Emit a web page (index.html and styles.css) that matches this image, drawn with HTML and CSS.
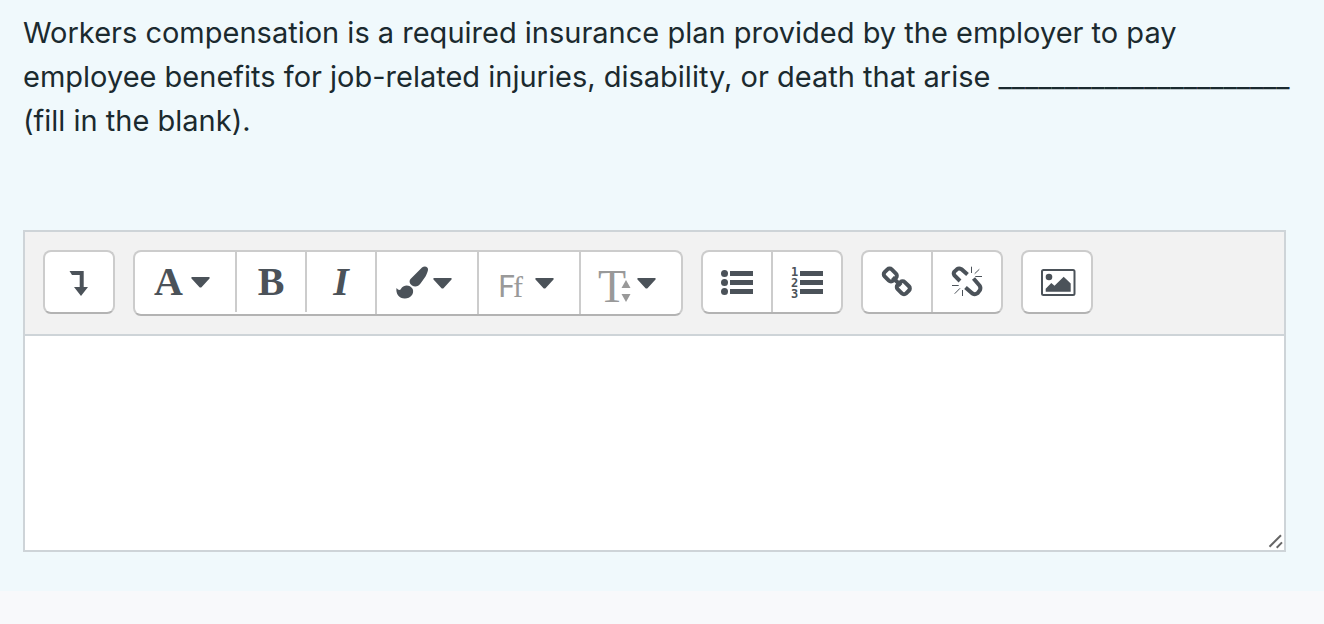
FILE: index.html
```html
<!DOCTYPE html>
<html lang="en">
<head>
    <meta charset="UTF-8">
    <meta name="viewport" content="width=device-width, initial-scale=1.0">
    <title>Quiz Question</title>
    <link rel="stylesheet" href="styles.css">
</head>
<body>
    <div class="question">
        <label class="question-text" for="answer">Workers compensation is a required insurance plan provided by the employer to pay employee benefits for job-related injuries, disability, or death that arise ______________________ (fill in the blank).</label>

        <div class="editor">
            <div class="toolbar">
                <div class="group">
                    <button type="button" aria-label="Show more buttons">
                        <svg class="icon" viewBox="0 0 36 36"><path d="M8.5 7H22.7V23H27L20 32L13 23H18.7V11H11Z"/></svg>
                    </button>
                </div>

                <div class="group">
                    <button type="button" class="drop short" aria-label="Paragraph styles">
                        <span class="glyph bold">A</span>
                        <svg class="caret" viewBox="0 0 19 11"><path d="M1 0H18Q19.5 .5 18.5 1.5L10.5 10.2Q9.5 11 8.5 10.2L.5 1.5Q-.5 .5 1 0Z"/></svg>
                    </button>
                    <button type="button" class="short" aria-label="Bold"><span class="bold">B</span></button>
                    <button type="button" class="short" aria-label="Italic"><span class="bold italic">I</span></button>
                    <button type="button" class="drop" aria-label="Font color">
                        <svg class="glyph" viewBox="0 0 37 36"><path d="M26 2.5C28.500 .5 32.500 1.500 32 5C31.700 7 30.5 9.500 29.500 11.500L24.5 18.500C22.500 21.500 19 22.500 16 20.500C13 18 13 15.500 15 13.500Z"/><path d="M.5 23C2.500 25.500 4.500 25.5 5.500 23C8 19.500 14 19.500 16.700 24C18.5 29 14.5 33.300 9 33.500C3.500 33.700 -.5 29 .5 23Z"/></svg>
                        <svg class="caret" viewBox="0 0 19 11"><path d="M1 0H18Q19.5 .5 18.5 1.5L10.5 10.2Q9.5 11 8.5 10.2L.5 1.5Q-.5 .5 1 0Z"/></svg>
                    </button>
                    <button type="button" class="drop" aria-label="Font family">
                        <svg class="glyph grey" viewBox="0 0 37 36"><text class="f-sans" x="0" y="32">F</text><text class="f-serif" x="15" y="32">f</text></svg>
                        <svg class="caret" viewBox="0 0 19 11"><path d="M1 0H18Q19.5 .5 18.5 1.5L10.5 10.2Q9.5 11 8.5 10.2L.5 1.5Q-.5 .5 1 0Z"/></svg>
                    </button>
                    <button type="button" class="drop" aria-label="Font size">
                        <svg class="glyph grey" viewBox="0 0 37 36"><text class="t-serif" x="-2" y="37">T</text><path d="M21.5 23L26 15L30.5 23ZM21.5 29L26 37L30.5 29Z"/></svg>
                        <svg class="caret" viewBox="0 0 19 11"><path d="M1 0H18Q19.5 .5 18.5 1.5L10.5 10.2Q9.5 11 8.5 10.2L.5 1.5Q-.5 .5 1 0Z"/></svg>
                    </button>
                </div>

                <div class="group">
                    <button type="button" aria-label="Unordered list">
                        <svg class="icon" viewBox="0 0 36 36"><circle cx="5.5" cy="9.5" r="3.5"/><circle cx="5.5" cy="18.5" r="3.5"/><circle cx="5.5" cy="27.5" r="3.5"/><path d="M11 7h23v5H11zM11 16h23v5H11zM11 25h23v5H11z"/></svg>
                    </button>
                    <button type="button" aria-label="Ordered list">
                        <svg class="icon" viewBox="0 0 36 36"><text class="digit" x="2" y="12">1</text><text class="digit" x="2" y="23">2</text><text class="digit" x="2" y="34">3</text><path d="M11 7h23v5H11zM11 16h23v5H11zM11 25h23v5H11z"/></svg>
                    </button>
                </div>

                <div class="group">
                    <button type="button" aria-label="Link">
                        <svg class="icon line" viewBox="0 0 36 36"><rect x="-6" y="-5" width="12" height="10" rx="3" transform="translate(11.3 11) rotate(45)"/><rect x="-6" y="-5" width="12" height="10" rx="3" transform="translate(24.3 23.7) rotate(45)"/><path d="M13.5 13.5L22 21.5"/></svg>
                    </button>
                    <button type="button" aria-label="Unlink">
                        <svg class="icon line" viewBox="0 0 36 36"><path d="M11 17L5.5 11.5Q4 9.5 5.5 7.5L8 5.2Q10 3.8 12.500 5.2L18.5 10.5M24.5 14.5L30.5 21.5Q32 23.5 31 26L28.5 29.2Q26 31 23.5 29.5L16.5 23.5"/><path class="thin" d="M22.5 2.7V9M30.3 5.3L25.7 9.7M26.3 12.5H33M3 21.5H9.7M11 24.3L5.7 29.7M13.5 26V32"/></svg>
                    </button>
                </div>

                <div class="group">
                    <button type="button" aria-label="Image">
                        <svg class="icon" viewBox="0 0 36 36"><rect class="frame" x="3" y="6" width="32.5" height="25" rx="1.5"/><circle cx="10" cy="13" r="3.3"/><path d="M6.7 27.7V24.7L12.3 19L15.5 21.7L24.7 12.7L31.7 19.5V27.7Z"/></svg>
                    </button>
                </div>
            </div>

            <div class="content">
                <textarea id="answer"></textarea>
                <svg class="handle" viewBox="0 0 16 16"><path d="M1.5 12.7L13 1.2M8.7 13.7L14 8.4"/></svg>
            </div>
        </div>
    </div>
</body>
</html>
```

FILE: styles.css
```css
* {
    box-sizing: border-box;
}

body {
    margin: 0;
    background-color: #f8f9fb;
    font-family: Inter, "Liberation Sans", sans-serif;
}

.question {
    padding: 11px 24px 39px 23px;
    background-color: #f0f9fc;
}

.question-text {
    display: block;
    margin-bottom: 87px;
    color: #1b2a2f;
    font-size: 29px;
    line-height: 44px;
}

.editor {
    margin-right: 14px;
    border: 2px solid #ced4d8;
}

.toolbar {
    display: flex;
    flex-wrap: wrap;
    align-items: flex-start;
    gap: 18px;
    padding: 18px;
    background-color: #f2f2f2;
    border-bottom: 2px solid #ced4d8;
}

.group {
    display: flex;
    align-items: flex-start;
    background-color: #fff;
    border: 2px solid #ccc;
    border-bottom-color: #b3b3b3;
    border-radius: 8px;
}

button {
    display: flex;
    align-items: center;
    justify-content: center;
    box-sizing: content-box;
    width: 68px;
    height: 60px;
    padding: 0;
    background: none;
    border: 0;
    color: #4b5259;
    cursor: pointer;
}

button + button {
    border-left: 2px solid #ccc;
}

.drop {
    justify-content: flex-start;
    width: 81px;
    height: 62px;
    padding-left: 19px;
}

.short {
    height: 60px;
}

svg {
    fill: currentColor;
    overflow: visible;
}

.icon {
    width: 36px;
    height: 36px;
}

.glyph {
    flex: none;
    width: 37px;
    text-align: left;
}

.caret {
    width: 19px;
    height: 11px;
}

.grey {
    color: #999;
}

.bold {
    font: bold 40px/44px "Liberation Serif", serif;
}

.italic {
    font-style: italic;
}

.f-sans {
    font: 30px Lato, sans-serif;
}

.f-serif {
    font: 30px "Liberation Serif", serif;
}

.t-serif {
    font: 46px "Liberation Serif", serif;
}

.digit {
    font: bold 12px "DejaVu Sans Mono", monospace;
}

.line {
    fill: none;
    stroke: currentColor;
    stroke-width: 4px;
}

.thin {
    stroke-width: 1px;
}

.frame {
    fill: none;
    stroke: currentColor;
    stroke-width: 2px;
}

.content {
    position: relative;
}

textarea {
    display: block;
    width: 100%;
    height: 214px;
    padding: 12px;
    background-color: #fff;
    border: 0;
    outline: none;
    resize: none;
    color: #1b2a2f;
    font: inherit;
}

.handle {
    position: absolute;
    right: 0;
    bottom: 0;
    width: 16px;
    height: 16px;
    fill: none;
    stroke: #666;
    stroke-width: 2px;
    pointer-events: none;
}
```
